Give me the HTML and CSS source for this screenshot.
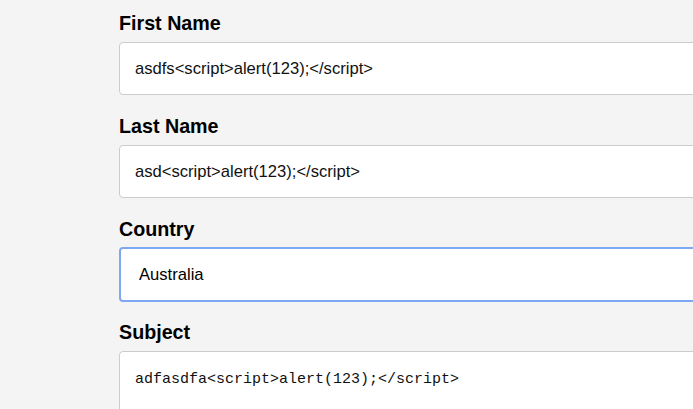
FILE: index.html
```html
<!DOCTYPE html>
<html>
<head>
<meta charset="utf-8">
<link rel="stylesheet" href="styles.css">
</head>
<body>
<form class="form">
  <div class="group">
    <label class="label" for="fname">First Name</label>
    <input class="field" id="fname" type="text" value="asdfs&lt;script&gt;alert(123);&lt;/script&gt;">
  </div>
  <div class="group">
    <label class="label" for="lname">Last Name</label>
    <input class="field" id="lname" type="text" value="asd&lt;script&gt;alert(123);&lt;/script&gt;">
  </div>
  <div class="group">
    <label class="label" for="country">Country</label>
    <select class="field select" id="country">
      <option>Australia</option>
    </select>
  </div>
  <div class="group">
    <label class="label" for="subject">Subject</label>
    <textarea class="field area" id="subject">adfasdfa&lt;script&gt;alert(123);&lt;/script&gt;</textarea>
  </div>
</form>
</body>
</html>
```

FILE: styles.css
```css
html, body {
  margin: 0;
  padding: 0;
  background: #f4f4f4;
  overflow: hidden;
  height: 409px;
}

.form {
  padding: 12px 0 0 119px;
  display: flex;
  flex-direction: column;
  width: 800px;
}

.group {
  display: flex;
  flex-direction: column;
  margin-bottom: 20px;
}

.label {
  font-family: "Liberation Sans", Arial, sans-serif;
  font-weight: bold;
  font-size: 19.7px;
  line-height: 22px;
  color: #000;
  margin-bottom: 8px;
}

.field {
  box-sizing: border-box;
  width: 700px;
  height: 53px;
  margin: 0;
  padding: 0 15px;
  border: 1px solid #cccccc;
  border-radius: 4px;
  background: #fff;
  font-family: "Liberation Sans", Arial, sans-serif;
  font-size: 16.6px;
  color: #111;
  outline: none;
}

.select {
  -webkit-appearance: none;
  appearance: none;
  height: 55px;
  margin-top: -1px;
  margin-bottom: -1px;
  border: 2px solid #7ea8f2;
  padding-left: 18px;
  color: #000;
}

.area {
  height: 120px;
  padding: 18px 15px 15px;
  font-family: "Liberation Mono", "Courier New", monospace;
  font-size: 15px;
  line-height: 20px;
  resize: none;
}
```
